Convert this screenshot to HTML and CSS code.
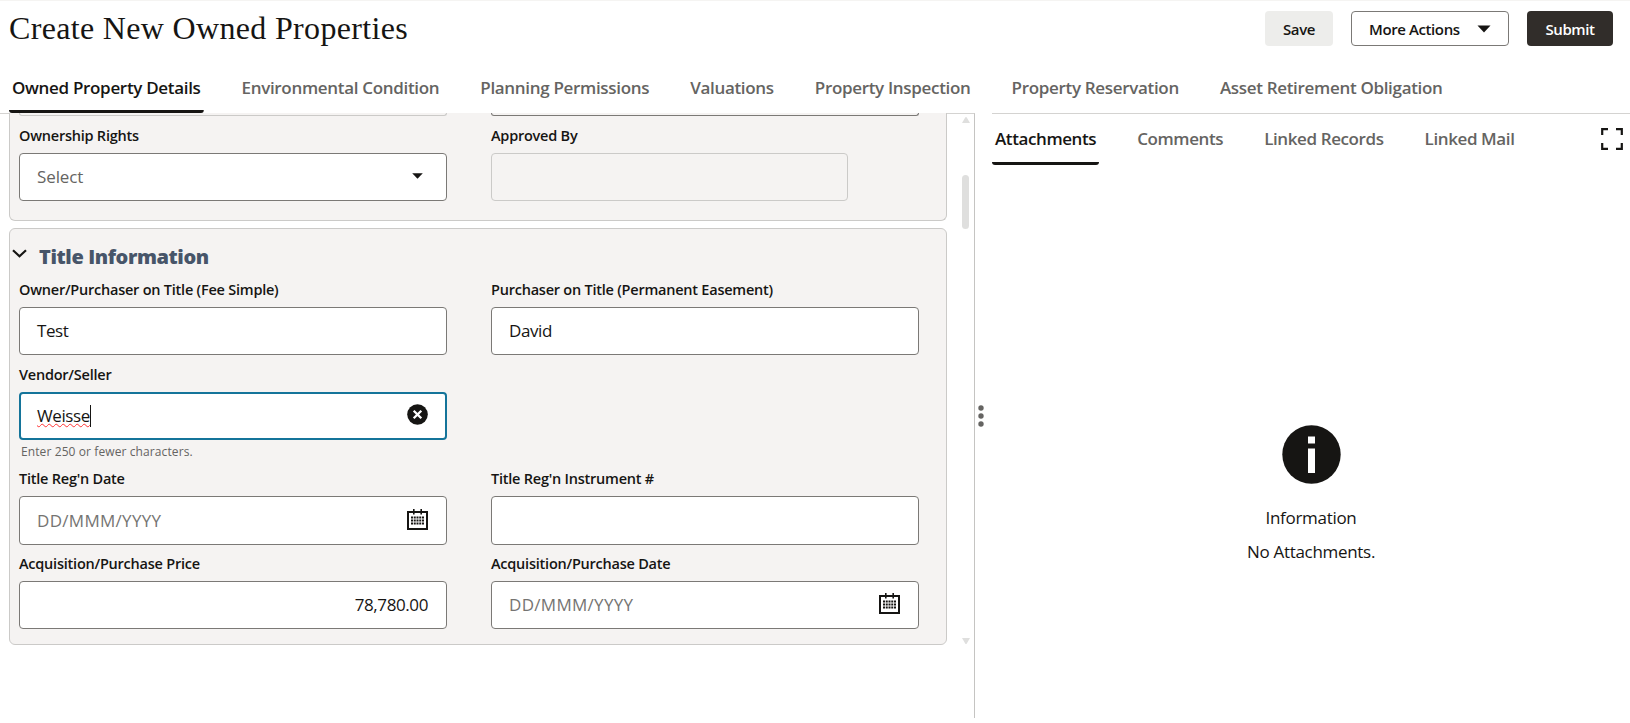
FILE: index.html
```html
<!DOCTYPE html>
<html lang="en">
<head>
<meta charset="utf-8">
<title>Create New Owned Properties</title>
<link rel="stylesheet" href="styles.css">
</head>
<body>
<svg class="defs" width="0" height="0">
  <symbol id="calendar" viewBox="0 0 21 21">
    <path d="M1 3h19v17H1z" fill="#fff" stroke="#161513" stroke-width="2"/>
    <path d="M0 2h21v2H0zM6 0h1.6v5.5H6zM13.4 0H15v5.5h-1.6z" fill="#161513"/>
    <path d="M4 8.5h13M4 11.5h13M4 14.5h13" stroke="#161513" stroke-width="2" stroke-dasharray="2 .75"/>
  </symbol>
</svg>
<header class="header">
  <h1 class="title">Create New Owned Properties</h1>
  <div class="actions">
    <button class="btn btn-save">Save</button>
    <button class="btn btn-more">More Actions<svg width="14" height="8" viewBox="0 0 14 8"><path d="M.5.5h13L7 7.5z" fill="#161513"/></svg></button>
    <button class="btn btn-submit">Submit</button>
  </div>
</header>
<nav class="tabs">
  <a class="tab active">Owned Property Details</a>
  <a class="tab">Environmental Condition</a>
  <a class="tab">Planning Permissions</a>
  <a class="tab">Valuations</a>
  <a class="tab">Property Inspection</a>
  <a class="tab">Property Reservation</a>
  <a class="tab">Asset Retirement Obligation</a>
</nav>
<main class="main">
  <section class="form-pane">
    <div class="form">
      <div class="panel panel-top">
        <div class="row row-cut"><div class="box-cut muted"></div><div class="box-cut"></div></div>
        <div class="row">
          <div class="field"><label>Ownership Rights</label>
            <div class="box"><span class="val select-hint">Select</span><span class="icon icon-arrow"><svg width="11" height="6" viewBox="0 0 11 6"><path d="M.2.2h10.6L5.5 5.8z" fill="#161513"/></svg></span></div></div>
          <div class="field"><label>Approved By</label><div class="box disabled"></div></div>
        </div>
      </div>
      <div class="panel panel-title">
        <div class="section-head"><svg width="15" height="9" viewBox="0 0 15 9"><path d="M1 1.2l6.5 6 6.5-6" fill="none" stroke="#161513" stroke-width="2.2"/></svg><h2>Title Information</h2></div>
        <div class="row">
          <div class="field"><label>Owner/Purchaser on Title (Fee Simple)</label><div class="box"><span class="val">Test</span></div></div>
          <div class="field"><label>Purchaser on Title (Permanent Easement)</label><div class="box"><span class="val">David</span></div></div>
        </div>
        <div class="row">
          <div class="field"><label>Vendor/Seller</label>
            <div class="box focus"><span class="val misspelt">Weisse</span><i class="caret"></i><span class="icon"><svg width="21" height="21" viewBox="0 0 21 21"><circle cx="10.5" cy="10.5" r="10.3" fill="#161513"/><path d="M6.7 6.7l7.6 7.6M14.3 6.7l-7.6 7.6" stroke="#fff" stroke-width="2.3"/></svg></span></div>
            <p class="hint">Enter 250 or fewer characters.</p></div>
        </div>
        <div class="row row-date">
          <div class="field"><label>Title Reg'n Date</label><div class="box tall"><span class="val placeholder">DD/MMM/YYYY</span><span class="icon"><svg width="21" height="21"><use href="#calendar"/></svg></span></div></div>
          <div class="field"><label>Title Reg'n Instrument #</label><div class="box tall"></div></div>
        </div>
        <div class="row">
          <div class="field"><label>Acquisition/Purchase Price</label><div class="box number"><span class="val">78,780.00</span></div></div>
          <div class="field"><label>Acquisition/Purchase Date</label><div class="box"><span class="val placeholder">DD/MMM/YYYY</span><span class="icon"><svg width="21" height="21"><use href="#calendar"/></svg></span></div></div>
        </div>
      </div>
    </div>
    <div class="scrollbar"><svg width="8" height="6" viewBox="0 0 8 6"><path d="M3.2.6q.8-1 1.6 0L8 6H0z" fill="#dfdfde"/></svg><div class="thumb"></div><svg width="8" height="6" viewBox="0 0 8 6"><path d="M3.2 5.4q.8 1 1.6 0L8 0H0z" fill="#dfdfde"/></svg></div>
  </section>
  <div class="splitter"><svg width="6" height="22" viewBox="0 0 6 22"><g fill="#656462"><circle cx="3" cy="3" r="2.7"/><circle cx="3" cy="11" r="2.7"/><circle cx="3" cy="19" r="2.7"/></g></svg></div>
  <aside class="side">
    <nav class="side-tabs">
      <a class="tab active">Attachments</a>
      <a class="tab">Comments</a>
      <a class="tab">Linked Records</a>
      <a class="tab">Linked Mail</a>
      <svg class="expand" width="22" height="22" viewBox="0 0 22 22"><path d="M1.2 7V1.2H7M15 1.2h5.8V7M20.8 15v5.8H15M7 20.8H1.2V15" fill="none" stroke="#161513" stroke-width="2.2"/></svg>
    </nav>
    <div class="empty">
      <svg width="59" height="59" viewBox="0 0 59 59"><circle cx="29.5" cy="29.5" r="29.2" fill="#161513"/><path d="M26 11.5h7v7h-7zM26 23.5h7V48h-7z" fill="#fff"/></svg>
      <p>Information</p>
      <p>No Attachments.</p>
    </div>
  </aside>
</main>
</body>
</html>
```

FILE: styles.css
```css
* { box-sizing: border-box; }
body {
  margin: 0;
  height: 723px;
  overflow: hidden;
  background: #fff;
  color: #161513;
  font-family: "Open Sans", "Noto Sans", sans-serif;
  display: flex;
  flex-direction: column;
}
.defs { display: none; }
h1, h2, p { margin: 0; }

.header {
  height: 62px;
  padding: 10px 17px 0 9px;
  border-top: 1px solid #f5f4f2;
  display: flex;
  justify-content: space-between;
  align-items: flex-start;
}
.title {
  font: 400 32px/34px "Liberation Serif", serif;
  letter-spacing: .33px;
}
.actions { display: flex; gap: 18px; }
.btn {
  height: 35px;
  padding: 1px 0 0;
  border: 0;
  border-radius: 4px;
  font: 600 15px/34px "Open Sans", sans-serif;
  letter-spacing: -.4px;
  color: #161513;
}
.btn-save { width: 68px; background: #ededeb; }
.btn-more {
  width: 158px;
  border: 1px solid #7b7976;
  background: #fff;
  display: flex;
  align-items: center;
  justify-content: space-between;
  padding: 0 17px;
}
.btn-submit { width: 86px; background: #312d2a; color: #fff; }

.tabs { display: flex; height: 51px; padding-left: 9px; gap: 35px; }
.tab {
  padding: 0 3px;
  font-size: 17px;
  font-weight: 600;
  letter-spacing: -.32px;
  line-height: 51px;
  color: #656462;
  white-space: nowrap;
}
.tab.active {
  color: #161513;
  background: linear-gradient(#161513, #161513) bottom / 100% 3px no-repeat;
  border-radius: 3px;
}

.main { display: flex; height: 605px; }
.form-pane {
  width: 975px;
  border-top: 1px solid #d4d3d1;
  border-right: 1px solid #c5c4c2;
  padding-left: 9px;
  display: flex;
}
.form { width: 938px; margin-top: -1px; }
.panel {
  border: 1px solid #cbcac8;
  border-radius: 6px;
  background: #f5f3f2;
  padding-left: 9px;
}
.panel-top { height: 108px; border-top: 0; border-radius: 0 0 6px 6px; }
.panel-title { height: 417px; margin-top: 7px; }
.row { display: flex; gap: 44px; height: 85px; }
.row-cut { height: 3px; }
.box-cut { width: 428px; border: 1px solid #7b7976; border-top: 0; border-radius: 0 0 4px 4px; }
.box-cut.muted { border-color: #cbcac8; }
.field { width: 428px; }
label {
  display: block;
  height: 37px;
  padding-top: 8px;
  font-size: 14.5px;
  line-height: 24px;
  font-weight: 600;
  letter-spacing: -.23px;
  white-space: nowrap;
}
.box {
  height: 48px;
  border: 1px solid #7b7976;
  border-radius: 4px;
  background: #fff;
  padding: 0 18px 0 17px;
  display: flex;
  align-items: center;
}
.tall { height: 49px; }
.disabled { width: 357px; border-color: #cbcac8; background: #f5f3f2; }
.focus { border: 2px solid #14749a; padding: 0 17px 0 16px; }
.number { justify-content: flex-end; }
.val { font-size: 17px; line-height: 24px; letter-spacing: -.4px; }
.select-hint { color: #656462; letter-spacing: -.1px; }
.placeholder { color: #757472; letter-spacing: .3px; }
.misspelt {
  text-decoration: underline wavy 1px #f33;
  text-decoration-skip-ink: none;
  text-underline-offset: 1px;
}
.caret { width: 1px; height: 22px; background: #161513; }
.icon { margin: 0 0 3px auto; display: flex; }
.icon-arrow { margin-right: 5px; }
.hint { padding-left: 2px; font-size: 12px; line-height: 24px; letter-spacing: .1px; color: #656462; }
.section-head { display: flex; height: 41px; gap: 12px; margin-left: -7px; padding-top: 20px; }
.section-head h2 {
  margin-top: -4px;
  font-size: 20px;
  line-height: 24px;
  font-weight: 800;
  letter-spacing: -.4px;
  color: #475569;
}
.row-date { margin-top: 19px; }

.scrollbar { width: 27px; padding: 3px 4px 0 15px; }
.scrollbar svg { display: block; margin-left: -.5px; }
.thumb { width: 7px; height: 54px; margin: 52px 0 409px; border-radius: 4px; background: #dfdfde; }

.splitter { width: 17px; padding: 292px 0 0 3px; }

.side { flex: 1; border-top: 1px solid #d4d3d1; }
.side-tabs { display: flex; height: 51px; gap: 35px; }
.side-tabs .tab { line-height: 50px; letter-spacing: -.4px; }
.expand { margin: 14px 7px 0 auto; }
.empty { display: flex; flex-direction: column; align-items: center; padding-top: 260px; }
.empty p { font-size: 17px; line-height: 34px; letter-spacing: -.3px; }
.empty svg { margin-bottom: 17px; }
```
